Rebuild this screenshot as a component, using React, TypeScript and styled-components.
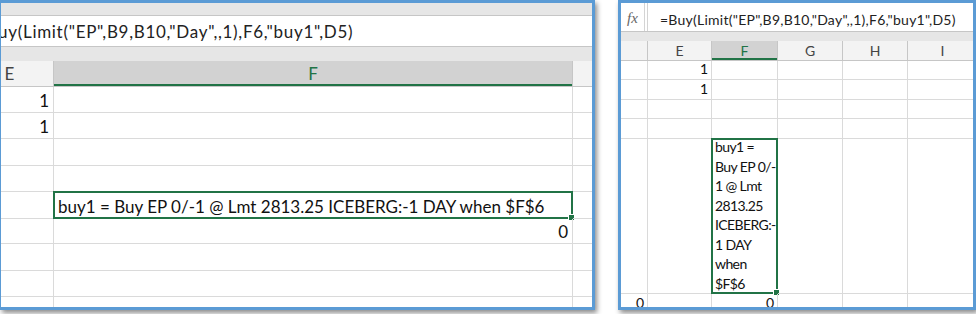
import React from 'react'
import styled, { createGlobalStyle } from 'styled-components'

const GREEN = '#217346'
const GRID = '#dadada'
const HEAD_LINE = '#c6c6c6'

const GlobalStyle = createGlobalStyle`
  html, body {
    margin: 0;
    padding: 0;
    background: #ffffff;
  }
  body {
    font-family: Lato, "Open Sans", sans-serif;
    color: #111111;
  }
`

type Col = { name: string; width: number }
type CellData = { row: number; col: number; text?: string; lines?: string[]; right?: boolean; selected?: boolean }

const formula = '=Buy(Limit("EP",B9,B10,"Day",,1),F6,"buy1",D5)'
const orderText = 'buy1 = Buy EP 0/-1 @ Lmt 2813.25 ICEBERG:-1 DAY when $F$6'

const bigCols: Col[] = [
    { name: 'E', width: 88 },
    { name: 'F', width: 519 },
    { name: 'G', width: 120 },
]
const bigRows = [26, 26, 27, 26, 27, 25, 27, 26, 26]
const bigCells: CellData[] = [
    { row: 0, col: 0, text: '1', right: true },
    { row: 1, col: 0, text: '1', right: true },
    { row: 4, col: 1, text: orderText, selected: true },
    { row: 5, col: 1, text: '0', right: true },
]

const smallCols: Col[] = [
    { name: '', width: 27 },
    { name: 'E', width: 64 },
    { name: 'F', width: 66 },
    { name: 'G', width: 65 },
    { name: 'H', width: 65 },
    { name: 'I', width: 70 },
]
const smallRows = [19, 20, 19, 20, 155, 20]
const smallCells: CellData[] = [
    { row: 0, col: 1, text: '1', right: true },
    { row: 1, col: 1, text: '1', right: true },
    {
        row: 4, col: 2, selected: true,
        lines: ['buy1 =', 'Buy EP 0/-', '1 @ Lmt', '2813.25', 'ICEBERG:-', '1 DAY', 'when', '$F$6'],
    },
    { row: 5, col: 0, text: '0', right: true },
    { row: 5, col: 2, text: '0', right: true },
]

function Sheet({ cols, rows, cells, active, headHeight, size, shift, pad }: {
    cols: Col[]; rows: number[]; cells: CellData[]; active: string
    headHeight: number; size: number; shift: number; pad: number
}) {
    const template = cols.map(c => `${c.width}px`).join(' ')
    const rowTemplate = [headHeight, ...rows].map(r => `${r}px`).join(' ')
    return (
        <Grid $cols={template} $rows={rowTemplate} $shift={shift}>
            {cols.map((c, i) => (
                <Head key={`h${i}`} $active={c.name === active} $size={size}>{c.name}</Head>
            ))}
            {rows.map((_, r) => cols.map((c, ci) => {
                const data = cells.find(d => d.row === r && d.col === ci)
                return (
                    <Cell key={`${r}-${ci}`} $right={data?.right} $size={size} $pad={pad} $wrap={!!data?.lines}>
                        {data?.text}
                        {data?.lines && (
                            <Lines>
                                {data.lines.map(l => <Line key={l}>{l}</Line>)}
                            </Lines>
                        )}
                        {data?.selected && <Selection />}
                    </Cell>
                )
            }))}
        </Grid>
    )
}

export default function App() {
    return (
        <>
            <GlobalStyle />
            <Canvas>
                <Shot $width={595} $leftEdge={1}>
                    <TopStrip />
                    <FormulaRow $height={31}>
                        <FormulaInput $indent={-25} $size={17} $lift={0} $tracking={0.7}>{formula}</FormulaInput>
                    </FormulaRow>
                    <Band $height={14} />
                    <Sheet cols={bigCols} rows={bigRows} cells={bigCells} active="F"
                        headHeight={26} size={17} shift={-35} pad={4} />
                </Shot>
                <Shot $width={358} $leftEdge={3}>
                    <FormulaRow $height={29}>
                        <FxBox>fx</FxBox>
                        <FormulaInput $indent={12} $size={14} $lift={5} $tracking={0.25} $boxed>{formula}</FormulaInput>
                    </FormulaRow>
                    <Band $height={9} />
                    <Sheet cols={smallCols} rows={smallRows} cells={smallCells} active="F"
                        headHeight={20} size={14} shift={0} pad={3} />
                </Shot>
            </Canvas>
        </>
    )
}

const Canvas = styled.div`
    width: 976px;
    height: 314px;

    display: flex;
    flex-direction: row;
    align-items: flex-start;
    gap: 23px;

    overflow: hidden;
`

const Shot = styled.div<{ $width: number; $leftEdge: number }>`
    width: ${p => p.$width}px;
    height: 310px;
    flex-shrink: 0;
    box-sizing: border-box;

    display: flex;
    flex-direction: column;

    border: 3px solid #5b9bd5;
    border-left-width: ${p => p.$leftEdge}px;
    background: #ffffff;
    box-shadow: 2px 3px 5px rgba(0, 0, 0, 0.45);
    overflow: hidden;
`

const TopStrip = styled.div`
    height: 13px;
    flex-shrink: 0;
    box-sizing: border-box;

    background: #e6e6e6;
    border-bottom: 1px solid ${HEAD_LINE};
`

const FormulaRow = styled.div<{ $height: number }>`
    height: ${p => p.$height}px;
    flex-shrink: 0;
    box-sizing: border-box;

    display: flex;
    flex-direction: row;

    background: #ffffff;
    border-bottom: 1px solid ${HEAD_LINE};
    overflow: hidden;
`

const FxBox = styled.div`
    width: 24px;
    flex-shrink: 0;
    box-sizing: border-box;

    display: flex;
    justify-content: center;
    align-items: center;
    padding-top: 2px;

    font-family: "Liberation Serif", serif;
    font-style: italic;
    font-size: 15px;
    color: #666666;
    border-right: 1px solid #d4d4d4;
`

const FormulaInput = styled.div<{ $indent: number; $size: number; $lift: number; $tracking: number; $boxed?: boolean }>`
    flex: 1;
    box-sizing: border-box;

    display: flex;
    align-items: center;
    padding-top: ${p => p.$lift}px;
    margin-left: ${p => (p.$boxed ? 2 : 0)}px;
    text-indent: ${p => p.$indent}px;

    font-size: ${p => p.$size}px;
    line-height: 1;
    letter-spacing: ${p => p.$tracking}px;
    white-space: nowrap;
    color: #222222;
    border-left: ${p => (p.$boxed ? `1px solid #d4d4d4` : 'none')};
`

const Band = styled.div<{ $height: number }>`
    height: ${p => p.$height}px;
    flex-shrink: 0;

    background: #e6e6e6;
`

const Grid = styled.div<{ $cols: string; $rows: string; $shift: number }>`
    display: grid;
    grid-template-columns: ${p => p.$cols};
    grid-template-rows: ${p => p.$rows};
    margin-left: ${p => p.$shift}px;
`

const Head = styled.div<{ $active: boolean; $size: number }>`
    box-sizing: border-box;

    display: flex;
    justify-content: center;
    align-items: center;

    font-size: ${p => p.$size}px;
    line-height: 1;
    color: ${p => (p.$active ? GREEN : '#444444')};
    background: ${p => (p.$active ? '#d2d2d2' : '#f3f3f3')};
    border-right: 1px solid ${HEAD_LINE};
    border-bottom: 1px solid ${HEAD_LINE};
    box-shadow: ${p => (p.$active ? `inset 0 -2px 0 ${GREEN}` : 'none')};
`

const Cell = styled.div<{ $right?: boolean; $size: number; $pad: number; $wrap: boolean }>`
    position: relative;
    box-sizing: border-box;

    display: flex;
    align-items: flex-end;
    justify-content: ${p => (p.$right ? 'flex-end' : 'flex-start')};
    padding: 0 ${p => p.$pad}px ${p => (p.$wrap ? 0 : 3)}px;

    font-size: ${p => p.$size}px;
    line-height: 1;
    white-space: nowrap;
    color: #111111;
    border-right: 1px solid ${GRID};
    border-bottom: 1px solid ${GRID};
`

const Lines = styled.div`
    display: flex;
    flex-direction: column;
    letter-spacing: -0.6px;
`

const Line = styled.span`
    line-height: 19.5px;
`

const Selection = styled.div`
    position: absolute;
    left: -1px;
    top: -1px;
    right: -1px;
    bottom: -1px;

    border: 2px solid ${GREEN};
    pointer-events: none;

    &::after {
        content: '';
        position: absolute;
        right: -4px;
        bottom: -4px;
        width: 5px;
        height: 5px;
        background: ${GREEN};
        border: 1px solid #ffffff;
    }
`
